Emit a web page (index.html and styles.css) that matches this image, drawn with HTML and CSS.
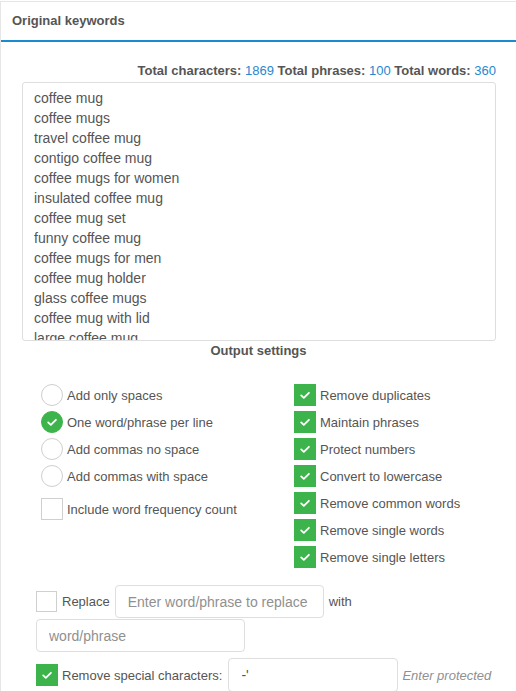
FILE: index.html
```html
<!DOCTYPE html>
<html>
<head>
<meta charset="utf-8">
<link rel="stylesheet" href="styles.css">
</head>
<body>
<div class="panel">
  <div class="panel-head">Original keywords</div>
  <div class="panel-body">
    <div class="stats"><b>Total characters:</b> <span class="num">1869</span> <b>Total phrases:</b> <span class="num">100</span> <b>Total words:</b> <span class="num">360</span></div>
    <textarea class="kw" readonly>coffee mug
coffee mugs
travel coffee mug
contigo coffee mug
coffee mugs for women
insulated coffee mug
coffee mug set
funny coffee mug
coffee mugs for men
coffee mug holder
glass coffee mugs
coffee mug with lid
large coffee mug
coffee mug warmer
personalized coffee mugs</textarea>
    <div class="section-title">Output settings</div>
    <div class="options">
      <div class="col">
        <div class="opt"><span class="radio"></span><span>Add only spaces</span></div>
        <div class="opt"><span class="radio on"><svg viewBox="0 0 22 22"><path d="M6.8 11.4l2.9 2.8 5.6-5.6"/></svg></span><span>One word/phrase per line</span></div>
        <div class="opt"><span class="radio"></span><span>Add commas no space</span></div>
        <div class="opt"><span class="radio"></span><span>Add commas with space</span></div>
        <div class="opt opt-gap"><span class="box"></span><span>Include word frequency count</span></div>
      </div>
      <div class="col">
        <div class="opt"><span class="box on"><svg viewBox="0 0 22 22"><path d="M6.8 11.4l2.9 2.8 5.6-5.6"/></svg></span><span>Remove duplicates</span></div>
        <div class="opt"><span class="box on"><svg viewBox="0 0 22 22"><path d="M6.8 11.4l2.9 2.8 5.6-5.6"/></svg></span><span>Maintain phrases</span></div>
        <div class="opt"><span class="box on"><svg viewBox="0 0 22 22"><path d="M6.8 11.4l2.9 2.8 5.6-5.6"/></svg></span><span>Protect numbers</span></div>
        <div class="opt"><span class="box on"><svg viewBox="0 0 22 22"><path d="M6.8 11.4l2.9 2.8 5.6-5.6"/></svg></span><span>Convert to lowercase</span></div>
        <div class="opt"><span class="box on"><svg viewBox="0 0 22 22"><path d="M6.8 11.4l2.9 2.8 5.6-5.6"/></svg></span><span>Remove common words</span></div>
        <div class="opt"><span class="box on"><svg viewBox="0 0 22 22"><path d="M6.8 11.4l2.9 2.8 5.6-5.6"/></svg></span><span>Remove single words</span></div>
        <div class="opt"><span class="box on"><svg viewBox="0 0 22 22"><path d="M6.8 11.4l2.9 2.8 5.6-5.6"/></svg></span><span>Remove single letters</span></div>
      </div>
    </div>
    <div class="replace-row">
      <span class="box"></span>
      <span class="lbl">Replace</span>
      <input class="field f-replace" type="text" placeholder="Enter word/phrase to replace">
      <span class="lbl">with</span>
    </div>
    <div class="with-row">
      <input class="field f-with" type="text" placeholder="word/phrase">
    </div>
    <div class="special-row">
      <span class="box on"><svg viewBox="0 0 22 22"><path d="M6.8 11.4l2.9 2.8 5.6-5.6"/></svg></span>
      <span class="lbl">Remove special characters:</span>
      <input class="field f-special" type="text" value="-'">
      <span class="hint">Enter protected</span>
    </div>
  </div>
</div>
</body>
</html>
```
FILE: styles.css
```css
html, body {
  margin: 0;
  padding: 0;
  background: #fff;
  overflow: hidden;
}
body {
  width: 516px;
  height: 691px;
  font-family: "Liberation Sans", Arial, sans-serif;
  color: #555;
}
.panel {
  margin-top: 1px;
  border-top: 1px solid #e6e6e6;
  border-left: 1px solid #e6e6e6;
}
.panel-head {
  height: 38px;
  line-height: 38px;
  padding-left: 11px;
  font-size: 13px;
  font-weight: bold;
  color: #555;
  border-bottom: 2px solid #1b8bd1;
}
.panel-body {
  padding-top: 21px;
}
.stats {
  text-align: right;
  padding-right: 20px;
  font-size: 13px;
  line-height: 16px;
  color: #555;
  white-space: nowrap;
}
.stats .num {
  color: #1e88d0;
}
.kw {
  display: block;
  box-sizing: border-box;
  margin: 3px 0 0 21px;
  width: 474px;
  height: 259px;
  border: 1px solid #dedede;
  border-radius: 3px;
  padding: 5px 11px;
  font-family: "Liberation Sans", Arial, sans-serif;
  font-size: 14px;
  line-height: 20px;
  color: #555;
  resize: none;
  overflow: hidden;
  outline: none;
}
.section-title {
  margin-top: 2px;
  text-align: center;
  font-size: 13px;
  font-weight: bold;
  line-height: 16px;
  color: #555;
}
.options {
  display: grid;
  grid-template-columns: 253px 1fr;
  margin-top: 25px;
  padding-left: 40px;
}
.col {
  display: flex;
  flex-direction: column;
  gap: 5px;
}
.opt {
  display: flex;
  align-items: center;
  gap: 4px;
  height: 22px;
  font-size: 13px;
  color: #555;
  white-space: nowrap;
}
.opt-gap {
  margin-top: 6px;
}
.radio {
  box-sizing: border-box;
  width: 22px;
  height: 22px;
  border-radius: 50%;
  border: 1px solid #cfcfcf;
  background: #fff;
  flex: none;
}
.radio.on {
  background: #3db44b;
  border-color: #3db44b;
}
.box {
  box-sizing: border-box;
  width: 22px;
  height: 22px;
  border: 1px solid #cfcfcf;
  background: #fff;
  flex: none;
}
.box.on {
  background: #3db44b;
  border-color: #3db44b;
}
.radio svg, .box svg {
  display: block;
  width: 20px;
  height: 20px;
}
.radio svg path, .box svg path {
  fill: none;
  stroke: #fff;
  stroke-width: 2;
  stroke-linecap: round;
  stroke-linejoin: round;
}
.replace-row {
  display: flex;
  align-items: center;
  gap: 5px;
  margin-top: 17px;
  padding-left: 35px;
}
.replace-row .box {
  width: 21px;
  height: 21px;
}
.lbl {
  font-size: 13px;
  color: #555;
  white-space: nowrap;
}
.field {
  box-sizing: border-box;
  height: 33px;
  border: 1px solid #dedede;
  border-radius: 4px;
  padding: 0 12px;
  font-family: "Liberation Sans", Arial, sans-serif;
  font-size: 14px;
  color: #555;
  background: #fff;
  outline: none;
}
.field::placeholder {
  color: #909090;
}
.f-replace {
  width: 209px;
}
.with-row {
  margin-top: 1px;
  padding-left: 35px;
}
.f-with {
  width: 209px;
  display: block;
}
.special-row {
  display: flex;
  align-items: center;
  margin-top: 6px;
  padding-left: 35px;
}
.special-row .lbl {
  margin-left: 4px;
}
.f-special {
  width: 170px;
  height: 34px;
  margin-left: 6px;
}
.hint {
  margin-left: 4px;
  font-size: 13px;
  font-style: italic;
  color: #909090;
  white-space: nowrap;
}
```
